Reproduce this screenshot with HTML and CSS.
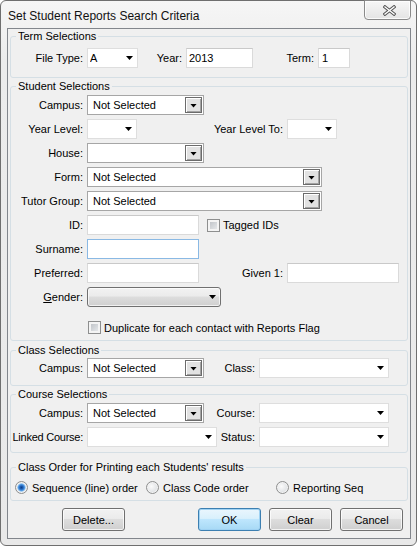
FILE: index.html
```html
<!DOCTYPE html>
<html lang="en">
<head>
<meta charset="utf-8">
<title>Set Student Reports Search Criteria</title>
<link rel="stylesheet" href="styles.css">
</head>
<body>
<div class="window">
  <div class="titlebar">
    <span class="title">Set Student Reports Search Criteria</span>
    <div class="close">
      <svg width="13" height="11" viewBox="0 0 13 11">
        <path d="M2 2 L11 9 M11 2 L2 9" stroke="#555" stroke-width="3.4" stroke-linecap="square" fill="none"/>
        <path d="M2 2 L11 9 M11 2 L2 9" stroke="#fff" stroke-width="1.4" stroke-linecap="square" fill="none"/>
      </svg>
    </div>
  </div>
  <div class="client">
    <fieldset class="grp grp-term">
      <legend>Term Selections</legend>
      <div class="body body-term">
        <div class="row">
          <span class="lbl">File Type:</span>
          <div class="dd w-filetype"><span class="val">A</span><i class="tri"></i></div>
          <span class="lbl2 w-yearlbl">Year:</span>
          <div class="txt w-year">2013</div>
          <span class="lbl2 w-termlbl">Term:</span>
          <div class="txt w-term pad3">1</div>
        </div>
      </div>
    </fieldset>

    <fieldset class="grp grp-student">
      <legend>Student Selections</legend>
      <div class="body body-student">
        <div class="row">
          <span class="lbl">Campus:</span>
          <div class="cmb w-campus"><span class="val">Not Selected</span><span class="cbtn"><i class="tri"></i></span></div>
        </div>
        <div class="row">
          <span class="lbl">Year Level:</span>
          <div class="dd w-small"><span class="val"></span><i class="tri"></i></div>
          <span class="lbl2 w-ylto">Year Level To:</span>
          <div class="dd w-small"><span class="val"></span><i class="tri"></i></div>
        </div>
        <div class="row">
          <span class="lbl">House:</span>
          <div class="cmb w-campus"><span class="val"></span><span class="cbtn"><i class="tri"></i></span></div>
        </div>
        <div class="row">
          <span class="lbl">Form:</span>
          <div class="cmb w-wide"><span class="val">Not Selected</span><span class="cbtn"><i class="tri"></i></span></div>
        </div>
        <div class="row">
          <span class="lbl">Tutor Group:</span>
          <div class="cmb w-wide"><span class="val">Not Selected</span><span class="cbtn"><i class="tri"></i></span></div>
        </div>
        <div class="row">
          <span class="lbl">ID:</span>
          <div class="txt w-name"></div>
          <span class="check check-tagged"><span class="cb"></span><span>Tagged IDs</span></span>
        </div>
        <div class="row">
          <span class="lbl">Surname:</span>
          <div class="txt w-name focus"></div>
        </div>
        <div class="row">
          <span class="lbl">Preferred:</span>
          <div class="txt w-name"></div>
          <span class="lbl2 w-given">Given 1:</span>
          <div class="txt w-name"></div>
        </div>
        <div class="row">
          <span class="lbl"><span><u>G</u>ender:</span></span>
          <div class="gcmb"><span class="val"></span><i class="tri"></i></div>
        </div>
        <div class="row-check">
          <span class="check"><span class="cb"></span><span>Duplicate for each contact with Reports Flag</span></span>
        </div>
      </div>
    </fieldset>

    <fieldset class="grp grp-class">
      <legend>Class Selections</legend>
      <div class="body body-class">
        <div class="row">
          <span class="lbl">Campus:</span>
          <div class="cmb w-campus"><span class="val">Not Selected</span><span class="cbtn"><i class="tri"></i></span></div>
          <span class="lbl2 w-classlbl">Class:</span>
          <div class="dd w-class"><span class="val"></span><i class="tri"></i></div>
        </div>
      </div>
    </fieldset>

    <fieldset class="grp grp-course">
      <legend>Course Selections</legend>
      <div class="body body-course">
        <div class="row">
          <span class="lbl">Campus:</span>
          <div class="cmb w-campus"><span class="val">Not Selected</span><span class="cbtn"><i class="tri"></i></span></div>
          <span class="lbl2 w-classlbl">Course:</span>
          <div class="dd w-class"><span class="val"></span><i class="tri"></i></div>
        </div>
        <div class="row">
          <span class="lbl"><span class="tight">Linked Course:</span></span>
          <div class="dd w-linked"><span class="val"></span><i class="tri"></i></div>
          <span class="lbl2 w-status">Status:</span>
          <div class="dd w-class"><span class="val"></span><i class="tri"></i></div>
        </div>
      </div>
    </fieldset>

    <fieldset class="grp grp-order">
      <legend>Class Order for Printing each Students' results</legend>
      <div class="body body-order">
        <div class="radios">
          <span class="opt opt-1"><span class="radio on"></span><span>Sequence (line) order</span></span>
          <span class="opt opt-2"><span class="radio"></span><span>Class Code order</span></span>
          <span class="opt"><span class="radio"></span><span>Reporting Seq</span></span>
        </div>
      </div>
    </fieldset>

    <div class="buttons">
      <button class="btn">Delete...</button>
      <button class="btn default push">OK</button>
      <button class="btn">Clear</button>
      <button class="btn">Cancel</button>
    </div>
  </div>
</div>
</body>
</html>
```

FILE: styles.css
```css
* { box-sizing: border-box; }
html, body { margin: 0; padding: 0; }
body {
  width: 417px;
  height: 546px;
  overflow: hidden;
  background: #ffffff;
  font-family: "Liberation Sans", Arial, sans-serif;
  font-size: 11px;
  color: #000;
}

.window {
  width: 417px;
  height: 546px;
  border: 1px solid #6f6f6f;
  border-radius: 6px 6px 6px 6px;
  background: linear-gradient(#f6f6f6, #ececec 60px, #e9e9e9);
  padding: 0 5px 6px 6px;
  display: flex;
  flex-direction: column;
}

.titlebar {
  height: 27px;
  display: flex;
  align-items: flex-start;
  flex: none;
}
.title {
  margin-top: 8px;
  padding-left: 1px;
  font-size: 12px;
  line-height: 14px;
  color: #111;
}
.close {
  margin-left: auto;
  margin-top: -1px;
  width: 47px;
  height: 20px;
  border: 1px solid #8a8a8a;
  border-radius: 0 0 4px 4px;
  background: linear-gradient(#f7f7f7, #e4e4e4);
  box-shadow: inset 0 0 0 1px rgba(255,255,255,0.8);
  display: flex;
  align-items: center;
  justify-content: center;
  padding-left: 3px;
}

.client {
  flex: 1;
  border: 1px solid #82868c;
  background: #f0f0f0;
  padding: 0 2px;
  display: flex;
  flex-direction: column;
}

.grp {
  margin: 0;
  padding: 0;
  border: 1px solid #d5dfe5;
  border-radius: 3px;
  min-width: 0;
}
.grp legend {
  margin-left: 5px;
  padding: 0 2px;
  line-height: 13px;
}
.grp-term { margin-top: 1px; }
.grp-student { margin-top: 2px; }
.grp-class { margin-top: 3px; }
.grp-course { margin-top: 2px; }
.grp-order { margin-top: 8px; }

.body { display: flex; flex-direction: column; gap: 4px; }
.body-term { padding: 5px 0 9px; }
.body-student { padding: 2px 0 6px; }
.body-class { padding: 1px 0 7px; }
.body-course { padding: 2px 0 5px; }
.body-order { padding: 7px 0 6px; }

.row {
  display: flex;
  align-items: center;
  height: 20px;
}
.lbl {
  width: 72px;
  margin-right: 4px;
  display: flex;
  justify-content: flex-end;
  white-space: nowrap;
  flex: none;
}
.tight { letter-spacing: -0.25px; }
.lbl2 {
  margin-right: 4px;
  text-align: right;
  white-space: nowrap;
  flex: none;
}
.w-yearlbl { width: 44px; }
.w-termlbl { width: 61px; }
.w-ylto { width: 146px; }
.w-given { width: 84px; }
.w-classlbl { width: 51px; }
.w-status { width: 38px; }

/* flat drop-down */
.dd {
  height: 20px;
  border: 1px solid #dedede;
  background: #fff;
  display: flex;
  align-items: center;
  padding: 0 4px 0 2px;
  flex: none;
}
.val { flex: 1; white-space: nowrap; overflow: hidden; }
.tri {
  display: block;
  width: 7px;
  height: 4px;
  background: #000;
  clip-path: polygon(0 0, 100% 0, 50% 100%);
  flex: none;
}
.w-filetype { width: 51px; }
.w-small { width: 50px; }
.w-class { width: 130px; }
.w-linked { width: 130px; }

/* combo with 3D button */
.cmb {
  height: 20px;
  border: 1px solid #a6a6a6;
  background: #fff;
  display: flex;
  align-items: center;
  padding: 0 1px 0 5px;
  flex: none;
}
.cbtn {
  width: 17px;
  height: 16px;
  border: 1px solid #6b6b6b;
  background: #e2e2e2;
  box-shadow: inset 1px 1px 0 #fff, inset -1px -1px 0 #a3a3a3;
  display: flex;
  align-items: center;
  justify-content: center;
  padding-top: 1px;
  flex: none;
}
.w-campus { width: 117px; }
.w-wide { width: 235px; }

/* text inputs */
.txt {
  height: 20px;
  border: 1px solid #dadada;
  border-top-color: #c9c9c9;
  background: #fff;
  display: flex;
  align-items: center;
  padding-left: 2px;
  flex: none;
}
.txt.pad3 { padding-left: 3px; }
.txt.focus { border-color: #8ab9e4; }
.w-year { width: 67px; }
.w-term { width: 32px; }
.w-name { width: 112px; }

/* gender combo (button style) */
.gcmb {
  width: 134px;
  height: 20px;
  border: 1px solid #707070;
  border-radius: 3px;
  background: linear-gradient(#f2f2f2 0%, #ebebeb 45%, #dddddd 50%, #cfcfcf 100%);
  box-shadow: inset 0 0 0 1px rgba(255,255,255,0.7);
  display: flex;
  align-items: center;
  padding: 0 4px 0 4px;
  flex: none;
}

/* checkboxes */
.check {
  display: flex;
  align-items: center;
  gap: 3px;
  white-space: nowrap;
}
.check-tagged { margin-left: 8px; }
.cb {
  width: 13px;
  height: 13px;
  border: 1px solid #8e8f8f;
  background: linear-gradient(135deg, #b8bcc1, #eef0f2);
  box-shadow: inset 0 0 0 2px #f4f4f4;
  flex: none;
}
.row-check {
  margin-top: 10px;
  height: 13px;
  display: flex;
  align-items: center;
  padding-left: 77px;
}

/* radios */
.radios {
  display: flex;
  align-items: center;
  height: 13px;
  padding-left: 4px;
}
.opt {
  display: flex;
  align-items: center;
  gap: 4px;
  white-space: nowrap;
}
.opt-1 { width: 131px; }
.opt-2 { width: 130px; }
.radio {
  width: 13px;
  height: 13px;
  border-radius: 50%;
  border: 1px solid #8e8f8f;
  background: radial-gradient(circle at 40% 40%, #fbfbfb, #d2d5d9);
  box-shadow: inset 0 0 0 1px #f2f2f2;
  flex: none;
}
.radio.on {
  background: radial-gradient(circle at 50% 50%, #0d3f86 0px, #1f5fb4 1.5px, #4c94e0 3px, #8fc3f0 3.8px, #e6eaee 4.6px, #d2d5d9 100%);
}

/* buttons */
.buttons {
  display: flex;
  margin-top: 7px;
  padding: 0 5px 0 52px;
  gap: 8px;
}
.btn {
  width: 63px;
  height: 23px;
  margin: 0;
  padding: 0;
  border: 1px solid #707070;
  border-radius: 3px;
  background: linear-gradient(#f2f2f2 0%, #ebebeb 45%, #dddddd 50%, #cfcfcf 100%);
  box-shadow: inset 0 0 0 1px rgba(255,255,255,0.75);
  font-family: "Liberation Sans", Arial, sans-serif;
  font-size: 11px;
  color: #000;
  display: flex;
  align-items: center;
  justify-content: center;
}
.btn.default {
  border-color: #3c7fb1;
  background: linear-gradient(#eaf6fd 0%, #d9f0fc 45%, #bee6fd 50%, #a7d9f5 100%);
  box-shadow: inset 0 0 0 1px #9fd2f3;
}
.btn.push { margin-left: auto; }
```
